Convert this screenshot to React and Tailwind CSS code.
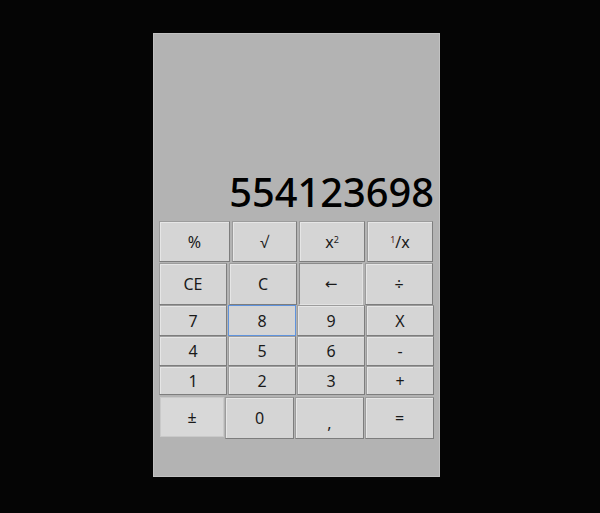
import React from "react";

const font = { fontFamily: '"Noto Sans", "Open Sans", sans-serif' };

const Key = ({ w, h, children, variant = "raised", className = "" }) => {
  const styles = {
    raised:
      "border border-t-[#9c9c9c] border-l-[#9c9c9c] border-r-[#7d7d7d] border-b-[#7d7d7d] shadow-[inset_1px_1px_0_#e6e6e6]",
    pressed:
      "border border-t-[#8a8a8a] border-l-[#8a8a8a] border-r-[#e2e2e2] border-b-[#e2e2e2]",
    focus: "border border-[#5f93dd]",
    flat: "border border-[#c9c9c9]",
  };
  return (
    <div
      className={`${w} ${h} bg-[#d5d5d5] ${styles[variant]} flex items-center justify-center text-[16px] text-[#1a1a1a] leading-none ${className}`}
    >
      {children}
    </div>
  );
};

export default function App() {
  return (
    <div className="w-[600px] h-[513px] bg-[#050505] overflow-hidden" style={font}>
      <div className="ml-[153px] mt-[33px] w-[287px] h-[444px] bg-[#b3b3b3] border border-[#c2c2c2] flex flex-col">
        {/* display */}
        <div className="h-[187px] flex items-end justify-end pr-[5px] pb-[6px]">
          <span className="text-[39.8px] leading-[46px] text-black font-medium">554123698</span>
        </div>

        <div className="ml-[5px] flex flex-col">
          <div className="flex gap-[2px]">
            <Key w="w-[71px]" h="h-[41px]">%</Key>
            <Key w="w-[65px]" h="h-[41px]">√</Key>
            <Key w="w-[66px]" h="h-[41px]">
              x<sup className="text-[9px] relative -top-[2px]">2</sup>
            </Key>
            <Key w="w-[66px]" h="h-[41px]">
              <sup className="text-[9px] relative -top-[2px] text-[#5a1a1a]">1</sup>/x
            </Key>
          </div>

          <div className="flex mt-[1px]">
            <Key w="w-[68px]" h="h-[42px]">CE</Key>
            <Key w="w-[68px]" h="h-[42px]" className="ml-[2px]">C</Key>
            <Key w="w-[64px]" h="h-[42px]" variant="pressed" className="ml-[2px]">
              <span className="text-[15px]" style={{ fontFamily: '"DejaVu Sans", sans-serif' }}>←</span>
            </Key>
            <Key w="w-[68px]" h="h-[42px]" className="ml-[2px]">÷</Key>
          </div>

          <div className="flex gap-[1px]">
            <Key w="w-[68px]" h="h-[31px]">7</Key>
            <Key w="w-[68px]" h="h-[31px]" variant="focus">8</Key>
            <Key w="w-[68px]" h="h-[31px]">9</Key>
            <Key w="w-[68px]" h="h-[31px]">X</Key>
          </div>

          <div className="flex gap-[1px]">
            <Key w="w-[68px]" h="h-[30px]">4</Key>
            <Key w="w-[68px]" h="h-[30px]">5</Key>
            <Key w="w-[68px]" h="h-[30px]">6</Key>
            <Key w="w-[68px]" h="h-[30px]">-</Key>
          </div>

          <div className="flex gap-[1px]">
            <Key w="w-[68px]" h="h-[29px]">1</Key>
            <Key w="w-[68px]" h="h-[29px]">2</Key>
            <Key w="w-[68px]" h="h-[29px]">3</Key>
            <Key w="w-[68px]" h="h-[29px]">+</Key>
          </div>

          <div className="flex mt-[2px]">
            <Key w="w-[64px]" h="h-[40px]" variant="flat" className="ml-[1px] bg-[#d8d8d8]">±</Key>
            <Key w="w-[69px]" h="h-[42px]" className="ml-[1px]">0</Key>
            <Key w="w-[69px]" h="h-[42px]" className="ml-[1px]">
              <span className="relative top-[5px]">,</span>
            </Key>
            <Key w="w-[69px]" h="h-[42px]" className="ml-[1px]">=</Key>
          </div>
        </div>
      </div>
    </div>
  );
}
